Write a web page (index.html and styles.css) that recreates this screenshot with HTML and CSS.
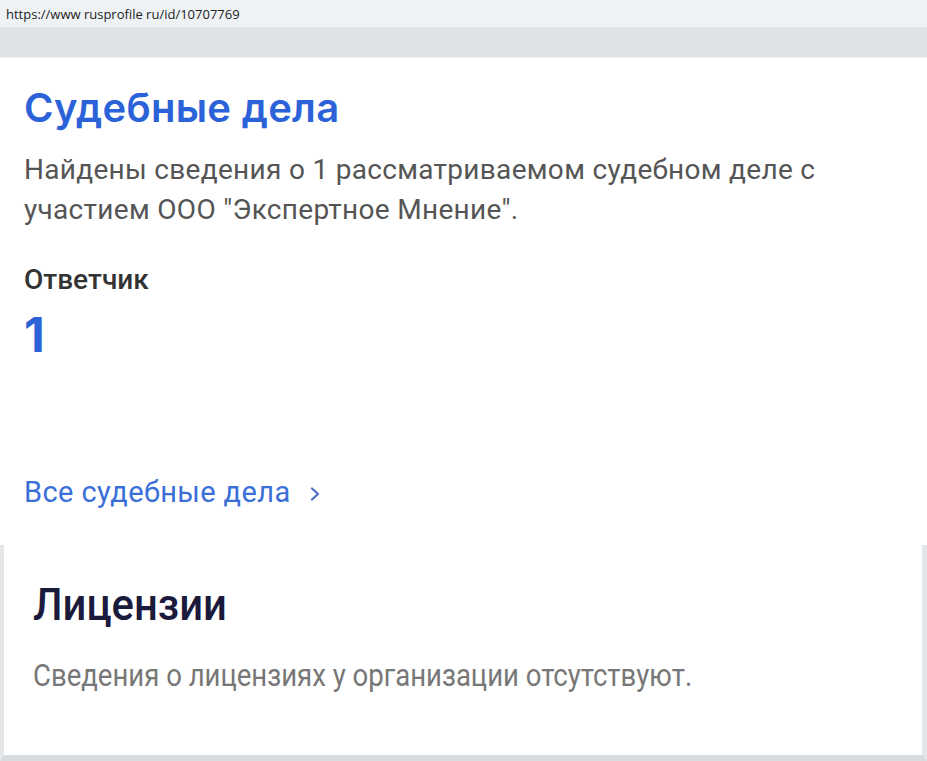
FILE: index.html
```html
<!DOCTYPE html>
<html lang="ru">
<head>
<meta charset="utf-8">
<title>rusprofile</title>
<link rel="stylesheet" href="styles.css">
</head>
<body>
<div class="urlbar">https://www rusprofile ru/id/10707769</div>
<div class="band"></div>
<section class="court">
  <h2 class="court-title">Судебные дела</h2>
  <p class="court-text">Найдены сведения о 1 рассматриваемом судебном деле с участием ООО "Экспертное Мнение".</p>
  <div class="role">Ответчик</div>
  <div class="count">1</div>
  <a class="all-link" href="#">Все судебные дела<svg class="chev" width="10" height="14" viewBox="0 0 10 14"><polyline points="2,1.5 8,7 2,12.5" fill="none" stroke="#4a6fc4" stroke-width="2.2" stroke-linecap="round" stroke-linejoin="round"/></svg></a>
</section>
<section class="lic">
  <h2 class="lic-title">Лицензии</h2>
  <p class="lic-text">Сведения о лицензиях у организации отсутствуют.</p>
</section>
</body>
</html>
```
FILE: styles.css
```css
* { box-sizing: border-box; }
html, body { margin: 0; padding: 0; background: #fff; }
body { width: 927px; height: 761px; overflow: hidden; font-family: Roboto, "Noto Sans", sans-serif; }

.urlbar {
  height: 28px;
  background: #eef2f5;
  border-bottom: 1px solid #e4e8eb;
  font-family: "Open Sans", "Liberation Sans", sans-serif;
  font-size: 13px;
  color: #222;
  padding: 6px 0 0 6px;
  line-height: 16px;
}
.band {
  height: 30px;
  background: #e0e3e6;
  border-bottom: 1px solid #eceef0;
}

.court { padding: 26px 0 0 24px; height: 487px; }
.court-title {
  margin: 0;
  font-size: 40px;
  line-height: 48px;
  font-weight: 600;
  color: #2b62d8;
  font-family: Inter, Roboto, sans-serif;
  letter-spacing: 0.3px;
}
.court-text {
  margin: 18px 0 0;
  width: 840px;
  font-size: 28px;
  line-height: 40px;
  color: #555;
  font-weight: 400;
  letter-spacing: 0.3px;
}
.role {
  margin-top: 33px;
  font-size: 28px;
  line-height: 34px;
  font-weight: 500;
  color: #333;
}
.count {
  margin-top: 10px;
  font-size: 48px;
  line-height: 56px;
  font-weight: 700;
  color: #2b62d8;
  font-family: Inter, Roboto, sans-serif;
}
.all-link {
  display: inline-flex;
  align-items: center;
  margin-top: 111px;
  font-size: 29px;
  line-height: 36px;
  letter-spacing: 0.4px;
  color: #3a6fd8;
  text-decoration: none;
}
.chev { margin-left: 19px; margin-top: 4px; }

.lic {
  height: 216px;
  border-left: 4px solid #e4e7ea;
  border-right: 5px solid #e4e7ea;
  border-bottom: 6px solid #d9dcdf;
  padding: 34px 0 0 29px;
}
.lic-title {
  margin: 0;
  font-size: 44px;
  line-height: 52px;
  font-weight: 500;
  color: #191a3c;
  transform: scaleX(0.95);
  transform-origin: left;
  white-space: nowrap;
}
.lic-text {
  margin: 24px 0 0;
  font-size: 32px;
  line-height: 40px;
  color: #777;
  transform: scaleX(0.86);
  transform-origin: left;
  white-space: nowrap;
}
```
